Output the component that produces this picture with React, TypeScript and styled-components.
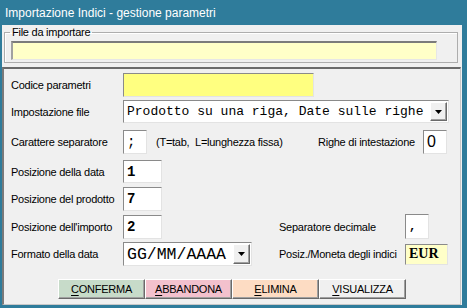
import React from 'react';
import styled, { createGlobalStyle } from 'styled-components';

const UI_FONT = `"Liberation Sans", Arial, sans-serif`;
const MONO = `"Liberation Mono", "Courier New", monospace`;

const GlobalStyle = createGlobalStyle`
  html, body {
    margin: 0;
    padding: 0;
    background: #2f7c9b;
  }
  body {
    font-family: ${UI_FONT};
    font-size: 11px;
    letter-spacing: -0.25px;
    color: #000;
  }
`;

const Window = styled.div`
  width: 467px;
  height: 308px;
  box-sizing: border-box;
  background: #2f7c9b;
  padding: 0 5px 3px 2px;
  display: flex;
  flex-direction: column;
`;

const TitleBar = styled.div`
  height: 25px;
  flex: none;
  display: flex;
  align-items: center;
  padding-left: 3px;
  color: #ffffff;
  font: 12px "Liberation Sans", sans-serif;
  letter-spacing: 0;
`;

const Body = styled.div`
  flex: 1;
  background: #f0f0f0;
  display: flex;
  flex-direction: column;
`;

const GroupBox = styled.fieldset`
  margin: 0 4px 0 2px;
  padding: 2px 6px 2px 6px;
  border: 1px solid #adadad;
  box-shadow: inset 1px 1px 0 #fff;
  min-width: 0;

  legend {
    padding: 0 2px;
    margin-left: -1px;
    font-size: 11px;
    line-height: 14px;
  }
`;

const FileInput = styled.div`
  width: 426px;
  height: 19px;
  box-sizing: border-box;
  background: #ffffc8;
  border-style: solid;
  border-width: 2px 1px 1px 2px;
  border-color: #7b7b7b #e6e6e6 #e6e6e6 #a0a0a0;
`;

const Panel = styled.div`
  flex: 1;
  margin: 4px 1px 0 0;
  padding: 4px 0 0 7px;
  border-style: solid;
  border-width: 2px 1px 1px 2px;
  border-color: #6a6a6a #c8c8c8 #c8c8c8 #7a7a7a;
  display: flex;
  flex-direction: column;
`;

const Row = styled.div<{ $h: number; $mt: number }>`
  display: flex;
  align-items: center;
  height: ${(p) => p.$h}px;
  margin-top: ${(p) => p.$mt}px;
  flex: none;
`;

const Label = styled.span<{ $w?: number; $ml?: number }>`
  width: ${(p) => p.$w ?? 112}px;
  margin-left: ${(p) => p.$ml ?? 0}px;
  flex: none;
  white-space: nowrap;
`;

const Hint = styled.span`
  width: 162px;
  margin-left: 9px;
  flex: none;
  white-space: nowrap;
`;

const Field = styled.div<{ $w: number; $h?: number; $bg?: string }>`
  width: ${(p) => p.$w}px;
  height: ${(p) => p.$h ?? 24}px;
  box-sizing: border-box;
  flex: none;
  background: ${(p) => p.$bg ?? '#ffffff'};
  border: 1px solid;
  border-color: #8a8a8a #e3e3e3 #e3e3e3 #8a8a8a;
  display: flex;
  align-items: center;
  padding-left: 3px;
  overflow: hidden;
  white-space: nowrap;
  letter-spacing: 0;
`;

const MonoText = styled.span<{ $size: number; $bold?: boolean }>`
  font-family: ${MONO};
  font-size: ${(p) => p.$size}px;
  font-weight: ${(p) => (p.$bold ? 700 : 400)};
  letter-spacing: 0;
`;

const SansDigit = styled.span`
  font-family: "Liberation Sans", Arial, sans-serif;
  font-size: 16px;
`;

const SerifText = styled.span`
  font-family: "Liberation Serif", "Times New Roman", serif;
  font-size: 14px;
  font-weight: 700;
`;

const Select = styled.div<{ $w: number; $h: number }>`
  width: ${(p) => p.$w}px;
  height: ${(p) => p.$h}px;
  box-sizing: border-box;
  flex: none;
  background: #fff;
  border: 1px solid;
  border-color: #8a8a8a #e3e3e3 #e3e3e3 #8a8a8a;
  display: flex;
  align-items: center;
  padding: 1px 1px 1px 3px;
`;

const SelectValue = styled.div`
  flex: 1;
  overflow: hidden;
  white-space: nowrap;
`;

const DropButton = styled.div`
  width: 17px;
  align-self: stretch;
  box-sizing: border-box;
  background: #f0f0f0;
  border: 1px solid;
  border-color: #ffffff #6a6a6a #6a6a6a #ffffff;
  box-shadow: inset -1px -1px 0 #a0a0a0;
  display: flex;
  align-items: center;
  justify-content: center;
`;

const ButtonBar = styled.div`
  display: flex;
  justify-content: center;
  margin-top: 13px;
  margin-left: -7px;
`;

const CmdButton = styled.button<{ $bg: string }>`
  width: 87px;
  height: 20px;
  box-sizing: border-box;
  padding: 0;
  background: ${(p) => p.$bg};
  font-family: ${UI_FONT};
  font-size: 11px;
  letter-spacing: -0.25px;
  color: #000;
  border: 1px solid;
  border-color: #ffffff #6a6a6a #6a6a6a #ffffff;
  box-shadow: inset -1px -1px 0 #a0a0a0;

  u {
    text-decoration: underline;
    text-underline-offset: 2px;
  }
`;

const Arrow = () => (
  <svg width="7" height="4" viewBox="0 0 7 4">
    <path d="M0 0h7L3.5 4z" fill="#000" />
  </svg>
);

const buttons = [
  { key: 'C', rest: 'ONFERMA', bg: '#c7dbc9' },
  { key: 'A', rest: 'BBANDONA', bg: '#f3c1cd' },
  { key: 'E', rest: 'LIMINA', bg: '#fddcc3' },
  { key: 'V', rest: 'ISUALIZZA', bg: '#f0f0f0' },
];

export default function App() {
  return (
    <>
      <GlobalStyle />
      <Window>
        <TitleBar>Importazione Indici - gestione parametri</TitleBar>
        <Body>
          <GroupBox>
            <legend>File da importare</legend>
            <FileInput />
          </GroupBox>

          <Panel>
            <Row $h={24} $mt={0}>
              <Label>Codice parametri</Label>
              <Field $w={191} $bg="#ffff80" />
            </Row>

            <Row $h={23} $mt={3}>
              <Label>Impostazione file</Label>
              <Select $w={326} $h={23}>
                <SelectValue>
                  <MonoText $size={13}>Prodotto su una riga, Date sulle righe</MonoText>
                </SelectValue>
                <DropButton>
                  <Arrow />
                </DropButton>
              </Select>
            </Row>

            <Row $h={24} $mt={7}>
              <Label>Carattere separatore</Label>
              <Field $w={24}>
                <MonoText $size={14}>;</MonoText>
              </Field>
              <Hint>(T=tab,&nbsp; L=lunghezza fissa)</Hint>
              <Label $w={105}>Righe di intestazione</Label>
              <Field $w={24}>
                <SansDigit>0</SansDigit>
              </Field>
            </Row>

            <Row $h={23} $mt={6}>
              <Label>Posizione della data</Label>
              <Field $w={39} $h={23}>
                <MonoText $size={14} $bold>1</MonoText>
              </Field>
            </Row>

            <Row $h={24} $mt={4}>
              <Label>Posizione del prodotto</Label>
              <Field $w={39}>
                <MonoText $size={14} $bold>7</MonoText>
              </Field>
            </Row>

            <Row $h={25} $mt={3}>
              <Label>Posizione dell'importo</Label>
              <Field $w={39}>
                <MonoText $size={14} $bold>2</MonoText>
              </Field>
              <Label $w={126} $ml={117}>Separatore decimale</Label>
              <Field $w={24} $h={25}>
                <MonoText $size={12} $bold>,</MonoText>
              </Field>
            </Row>

            <Row $h={24} $mt={3}>
              <Label>Formato della data</Label>
              <Select $w={129} $h={24}>
                <SelectValue>
                  <MonoText $size={16.5}>GG/MM/AAAA</MonoText>
                </SelectValue>
                <DropButton>
                  <Arrow />
                </DropButton>
              </Select>
              <Label $w={126} $ml={27}>Posiz./Moneta degli indici</Label>
              <Field $w={43} $h={21} $bg="#ffffc8">
                <SerifText>EUR</SerifText>
              </Field>
            </Row>

            <ButtonBar>
              {buttons.map((b) => (
                <CmdButton key={b.key} $bg={b.bg}>
                  <u>{b.key}</u>
                  {b.rest}
                </CmdButton>
              ))}
            </ButtonBar>
          </Panel>
        </Body>
      </Window>
    </>
  );
}
